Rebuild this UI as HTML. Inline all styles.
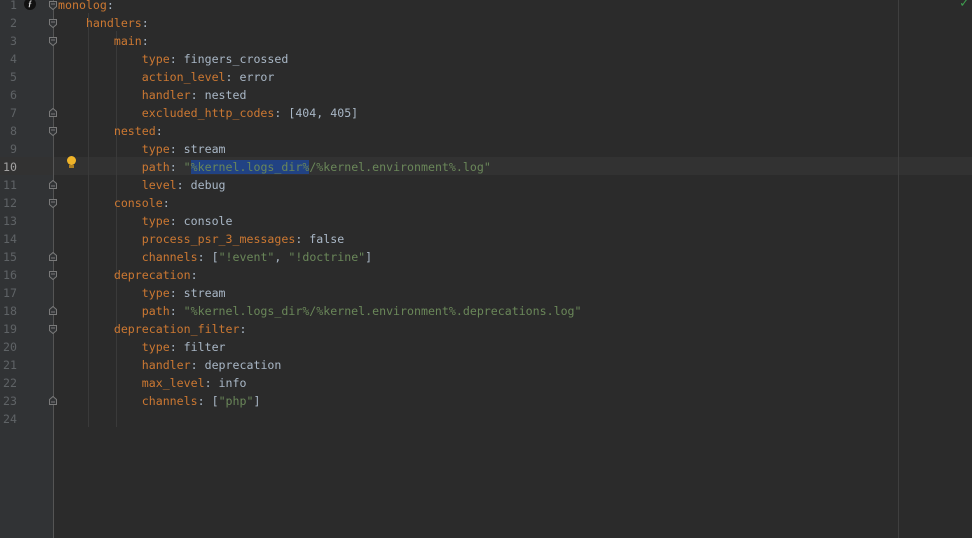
<!DOCTYPE html>
<html><head><meta charset="utf-8"><style>
html,body{margin:0;padding:0;}
body{width:972px;height:538px;background:#2b2b2b;position:relative;overflow:hidden;font-family:"DejaVu Sans Mono","Liberation Mono",monospace;font-size:11.6px;}
.gut{position:absolute;left:0;top:0;width:53px;height:538px;background:#313335;}
.gl{position:absolute;left:53px;top:0;width:1px;height:538px;background:#555;}
.cur{position:absolute;left:0;top:157px;width:972px;height:18px;background:#323232;}
.ln{position:absolute;left:0;width:17px;text-align:right;color:#5f6366;height:18px;line-height:18px;}
.code{position:absolute;left:58px;height:18px;line-height:18px;white-space:pre;color:#a9b7c6;}
.k{color:#cc7832}.s{color:#6a8759}
.sel{background:#214283;}
.ig{position:absolute;width:1px;background:#3a3a3a;}
.fm{position:absolute;left:49px;width:8px;height:9px;}
.margin{position:absolute;left:898px;top:0;width:1px;height:538px;background:#3f3f3f;}
</style></head><body>
<div class="gut"></div>
<div class="cur"></div>
<div class="gl"></div>
<div class="margin"></div>
<div class="ig" style="left:88px;top:13px;height:414px"></div>
<div class="ig" style="left:116px;top:31px;height:396px"></div>
<div style="position:absolute;left:24px;top:-2px;width:12px;height:12px;border-radius:6px;background:#111;color:#ddd;font:italic bold 8px 'Liberation Serif',serif;text-align:center;line-height:12px">ƒ</div>
<div style="position:absolute;left:67px;top:156px;width:9px;height:9px;border-radius:5px;background:#f0b429"></div>
<div style="position:absolute;left:69px;top:165px;width:5px;height:3px;background:#b08020"></div>
<div style="position:absolute;left:960px;top:-5px;color:#3f9f4f;font-size:14px;font-weight:bold">✓</div>
<div id="c"></div>
<script>
var L=[
'<span class="k">monolog</span>:',
'    <span class="k">handlers</span>:',
'        <span class="k">main</span>:',
'            <span class="k">type</span>: fingers_crossed',
'            <span class="k">action_level</span>: error',
'            <span class="k">handler</span>: nested',
'            <span class="k">excluded_http_codes</span>: [404, 405]',
'        <span class="k">nested</span>:',
'            <span class="k">type</span>: stream',
'            <span class="k">path</span>: <span class="s">"<span class="sel">%kernel.logs_dir%</span>/%kernel.environment%.log"</span>',
'            <span class="k">level</span>: debug',
'        <span class="k">console</span>:',
'            <span class="k">type</span>: console',
'            <span class="k">process_psr_3_messages</span>: false',
'            <span class="k">channels</span>: [<span class="s">"!event"</span>, <span class="s">"!doctrine"</span>]',
'        <span class="k">deprecation</span>:',
'            <span class="k">type</span>: stream',
'            <span class="k">path</span>: <span class="s">"%kernel.logs_dir%/%kernel.environment%.deprecations.log"</span>',
'        <span class="k">deprecation_filter</span>:',
'            <span class="k">type</span>: filter',
'            <span class="k">handler</span>: deprecation',
'            <span class="k">max_level</span>: info',
'            <span class="k">channels</span>: [<span class="s">"php"</span>]',
''];
var h='';var open=[1,2,3,8,12,16,19],close=[7,11,15,18,23];
for(var i=0;i<24;i++){var t=-4+18*i;
h+='<div class="ln" style="top:'+t+'px'+(i==9?';color:#a4a3a3':'')+'">'+(i+1)+'</div>';
h+='<div class="code" style="top:'+t+'px">'+L[i]+'</div>';
if(open.indexOf(i+1)>=0)h+='<svg class="fm" style="top:'+(t+5)+'px" viewBox="0 0 8 9"><path d="M0.5 0.5H7.5V5.5L4 8.5L0.5 5.5Z" fill="#313335" stroke="#7a7a7a"/><path d="M2 3H6" stroke="#7a7a7a"/></svg>';
if(close.indexOf(i+1)>=0)h+='<svg class="fm" style="top:'+(t+4)+'px" viewBox="0 0 8 9"><path d="M0.5 8.5H7.5V3.5L4 0.5L0.5 3.5Z" fill="#313335" stroke="#7a7a7a"/><path d="M2 6H6" stroke="#7a7a7a"/></svg>';}
document.getElementById('c').innerHTML=h;
</script>
</body></html>
